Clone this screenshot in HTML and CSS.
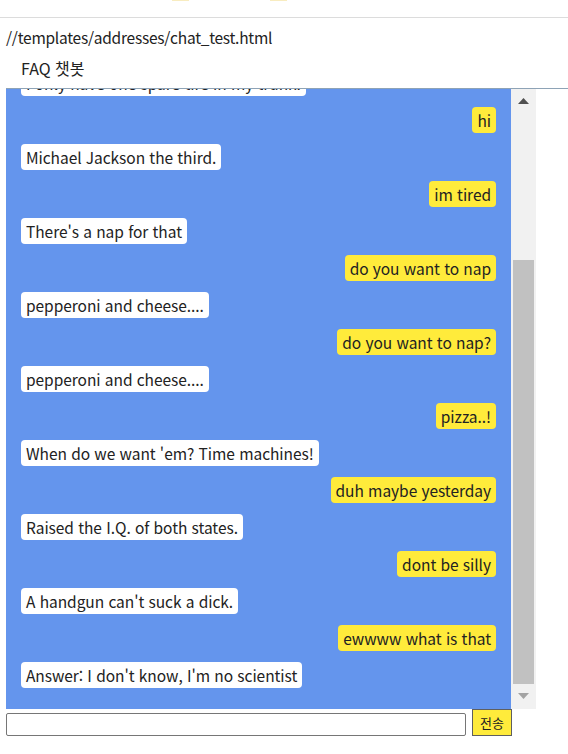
FILE: index.html
```html
<!DOCTYPE html>
<html lang="ko">
<head>
<meta charset="utf-8">
<title>FAQ 챗봇</title>
<link rel="stylesheet" href="styles.css">
</head>
<body>
<div class="topbar">
  <span class="blob"></span>
  <span class="blob"></span>
</div>
<div class="path">//templates/addresses/chat_test.html</div>
<div class="title">FAQ 챗봇</div>
<div class="chat">
  <div class="chat-body">
    <div class="messages">
      <div class="msg bot">I only have one spare tire in my trunk.</div>
      <div class="msg user">hi</div>
      <div class="msg bot">Michael Jackson the third.</div>
      <div class="msg user">im tired</div>
      <div class="msg bot">There's a nap for that</div>
      <div class="msg user">do you want to nap</div>
      <div class="msg bot">pepperoni and cheese....</div>
      <div class="msg user">do you want to nap?</div>
      <div class="msg bot">pepperoni and cheese....</div>
      <div class="msg user">pizza..!</div>
      <div class="msg bot">When do we want 'em? Time machines!</div>
      <div class="msg user">duh maybe yesterday</div>
      <div class="msg bot">Raised the I.Q. of both states.</div>
      <div class="msg user">dont be silly</div>
      <div class="msg bot">A handgun can't suck a dick.</div>
      <div class="msg user">ewwww what is that</div>
      <div class="msg bot">Answer: I don't know, I'm no scientist</div>
    </div>
    <div class="scrollbar">
      <div class="sb-btn sb-up">
        <svg width="11" height="6" viewBox="0 0 11 6"><polygon points="0,6 5.5,0 11,6" fill="#505050"/></svg>
      </div>
      <div class="sb-track"><div class="sb-thumb"></div></div>
      <div class="sb-btn sb-down">
        <svg width="11" height="6" viewBox="0 0 11 6"><polygon points="0,0 11,0 5.5,6" fill="#a3a3a3"/></svg>
      </div>
    </div>
  </div>
</div>
<div class="composer">
  <input class="input" type="text">
  <button class="send">전송</button>
</div>
</body>
</html>
```
FILE: styles.css
```css
html, body {
  margin: 0;
  padding: 0;
  background: #ffffff;
}
body {
  font-family: "Noto Sans CJK KR", "Noto Sans", sans-serif;
  font-size: 16px;
  color: #222222;
  width: 568px;
  overflow: hidden;
}
.topbar {
  height: 17px;
  border-bottom: 1px solid #dcdcdc;
  display: flex;
  padding-left: 172px;
  gap: 81px;
  box-sizing: content-box;
}
.blob {
  width: 17px;
  height: 1px;
  background: #f8ecc0;
}
.path {
  margin-top: 8px;
  padding-left: 6px;
  line-height: 22px;
  height: 22px;
  font-size: 15.5px;
  letter-spacing: -0.25px;
}
.title {
  margin-top: 9px;
  padding-left: 21px;
  line-height: 22px;
  height: 22px;
}
.chat {
  margin-top: 9px;
  margin-left: 6px;
  border-top: 1px solid #8ea3b6;
}
.chat-body {
  display: flex;
  height: 620px;
}
.messages {
  width: 505px;
  box-sizing: border-box;
  background: #6495ed;
  overflow: hidden;
  display: flex;
  flex-direction: column;
  justify-content: flex-end;
  gap: 11px;
  padding: 0 15px 21px;
}
.msg {
  flex-shrink: 0;
  line-height: 26px;
  height: 26px;
  padding: 0 5px;
  border-radius: 4px;
  white-space: nowrap;
  font-size: 15.5px;
  letter-spacing: -0.05px;
}
.bot {
  align-self: flex-start;
  background: #ffffff;
}
.user {
  align-self: flex-end;
  background: #ffeb3b;
}
.scrollbar {
  width: 25px;
  background: #f1f1f1;
  display: flex;
  flex-direction: column;
}
.sb-btn {
  display: flex;
  align-items: center;
  justify-content: center;
}
.sb-up {
  height: 24px;
  padding-bottom: 1px;
  box-sizing: border-box;
}
.sb-down {
  height: 25px;
  padding-bottom: 2px;
  box-sizing: border-box;
}
.sb-track {
  flex: 1;
  display: flex;
  flex-direction: column;
  justify-content: flex-end;
  padding: 0 2px;
}
.sb-thumb {
  height: 424px;
  background: #c1c1c1;
}
.composer {
  display: flex;
  align-items: flex-end;
  gap: 6px;
  padding-left: 6px;
}
.input {
  width: 460px;
  height: 23px;
  box-sizing: border-box;
  margin: 0;
  border: 1px solid #767676;
  border-radius: 2px;
  background: #ffffff;
  padding: 0 3px;
}
.send {
  width: 40px;
  height: 27px;
  box-sizing: border-box;
  margin: 0;
  padding: 0;
  border: 1px solid #5f5f5f;
  background: #ffeb3b;
  font-family: "Noto Sans CJK KR", sans-serif;
  font-size: 13px;
  color: #222222;
}
```
